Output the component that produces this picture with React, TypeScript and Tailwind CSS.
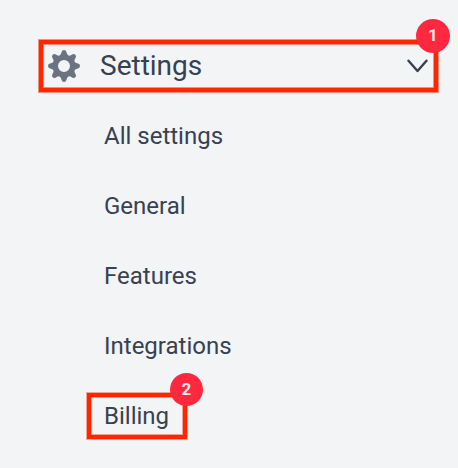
const links = ["All settings", "General", "Features", "Integrations", "Billing"];

function StepBadge({ step, className }: { step: number; className: string }) {
  return (
    <span
      className={`absolute flex items-center justify-center rounded-full bg-[#ff283f] text-[17px] font-bold text-[#ffe4e7] ${className}`}
    >
      {step}
    </span>
  );
}

function GearIcon() {
  return (
    <svg viewBox="-16 -16 32 32" className="h-8 w-8 shrink-0" fill="#6b7280">
      {[0, 45, 90, 135, 180, 225, 270, 315].map((angle) => (
        <path
          key={angle}
          transform={`rotate(${angle})`}
          d="M-4.7-10Q-2.9-11.3-2.4-14Q-2-16 0-16Q2-16 2.4-14Q2.9-11.3 4.7-10Z"
        />
      ))}
      <circle r="8.5" fill="none" stroke="#6b7280" strokeWidth="5" />
    </svg>
  );
}

export default function App() {
  return (
    <main className="h-[468px] w-[458px] bg-[#f3f4f6] pt-10 font-[Roboto,sans-serif] text-[#374151] antialiased">
      <button className="relative ml-[39px] flex h-[52px] w-[399px] items-center border-4 border-[#ff2600] px-[5px] shadow-[0_0_0_1px_#ff260080,inset_0_0_0_1px_#ff260080]">
        <GearIcon />
        <span className="ml-5 text-[28px]">Settings</span>
        <svg
          viewBox="0 0 22 14"
          className="ml-auto h-[14px] w-[22px]"
          fill="none"
          stroke="#374151"
          strokeWidth="2.4"
          strokeLinecap="round"
          strokeLinejoin="round"
        >
          <path d="M1.5 1.7 10.5 12 19.5 1.7" />
        </svg>
        <StepBadge step={1} className="-top-[25px] -right-4 h-[34px] w-[34px]" />
      </button>
      <ul className="mt-[9px] ml-[104px] text-2xl">
        {links.map((link) => (
          <li key={link} className="flex h-[70px] items-center">
            {link === "Billing" ? (
              <span className="relative -ml-[17px] flex h-[46px] w-[100px] items-center border-4 border-[#ff2600] pl-[13px] shadow-[0_0_0_1px_#ff260066,inset_0_0_0_1px_#ff260066]">
                {link}
                <StepBadge step={2} className="-top-[24px] -right-5 h-[33px] w-[33px]" />
              </span>
            ) : (
              link
            )}
          </li>
        ))}
      </ul>
    </main>
  );
}
